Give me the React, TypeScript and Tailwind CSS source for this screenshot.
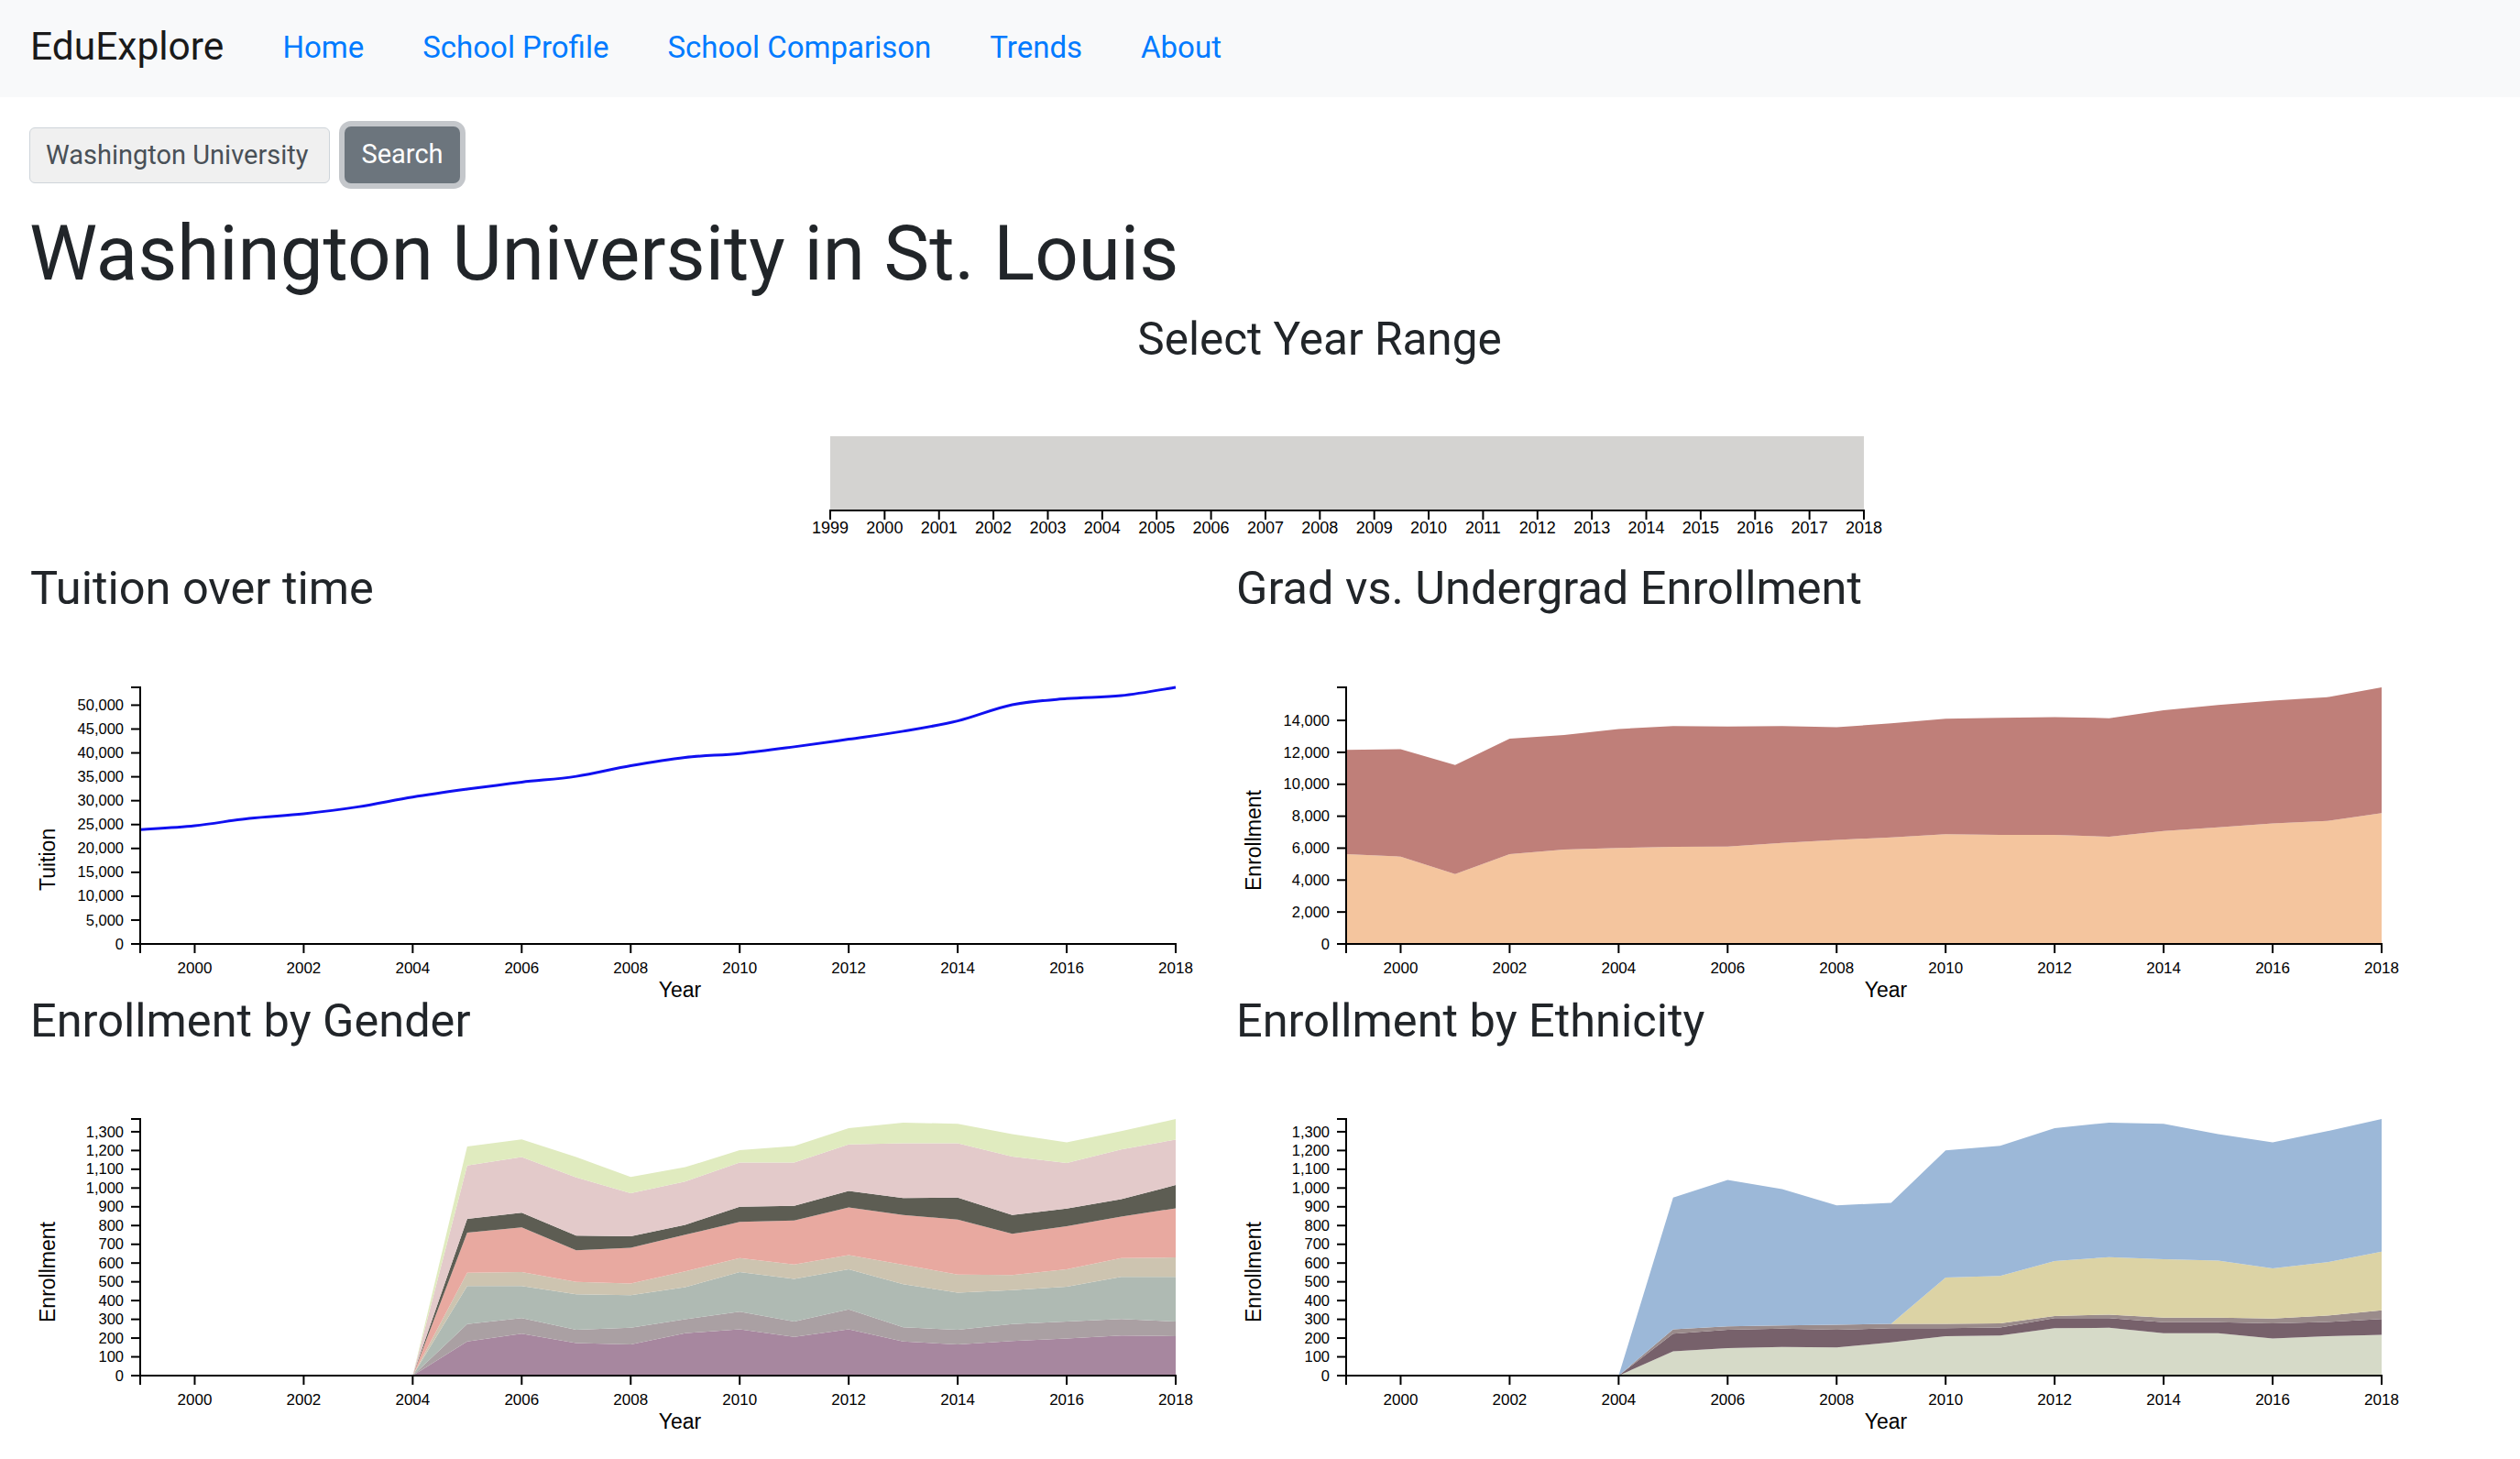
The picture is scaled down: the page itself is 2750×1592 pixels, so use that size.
import React from "react";

const YEARS = Array.from({ length: 20 }, (_, i) => 1999 + i);
const X0 = 120;
const X1 = 1250;
const YT = 82;
const YB = 362;
const AX = "Liberation Sans, Arial, sans-serif";

const xs = (i: number) => X0 + (i * (X1 - X0)) / 19;
const fmt = (n: number) => n.toLocaleString("en-US");

const Z6 = [0, 0, 0, 0, 0, 0];

const TUITION = [
  23930, 24760, 26290, 27250, 28710, 30750, 32410, 33880, 35090, 37330, 39050,
  39880, 41280, 42880, 44540, 46710, 50090, 51370, 52000, 53730,
];

const UNDER = [
  5620, 5470, 4380, 5620, 5910, 6010, 6080, 6100, 6330, 6520, 6670, 6870, 6830,
  6830, 6710, 7080, 7310, 7550, 7700, 8200,
];
const TOTAL = [
  12160, 12200, 11200, 12850, 13080, 13460, 13650, 13610, 13650, 13570, 13820,
  14100, 14160, 14210, 14140, 14630, 14960, 15240, 15450, 16070,
];

const GENDER: { c: string; v: number[] }[] = [
  { c: "#a7879f", v: [...Z6, 182, 223, 174, 166, 226, 247, 206, 247, 182, 166, 185, 198, 214, 210] },
  { c: "#aaa0a3", v: [...Z6, 275, 307, 244, 255, 300, 341, 288, 353, 258, 244, 275, 288, 302, 288] },
  { c: "#afbab3", v: [...Z6, 478, 478, 434, 429, 471, 552, 515, 567, 487, 442, 455, 474, 526, 526] },
  { c: "#cdc4b0", v: [...Z6, 548, 552, 499, 491, 556, 627, 593, 643, 591, 539, 536, 567, 627, 630] },
  { c: "#e8a9a0", v: [...Z6, 762, 790, 668, 681, 751, 819, 827, 897, 856, 832, 756, 796, 848, 892] },
  { c: "#5d5d53", v: [...Z6, 835, 869, 746, 743, 804, 900, 905, 985, 946, 949, 856, 890, 941, 1016] },
  { c: "#e3caca", v: [...Z6, 1120, 1165, 1056, 972, 1035, 1136, 1136, 1233, 1238, 1238, 1168, 1133, 1206, 1258] },
  { c: "#e0ebbf", v: [...Z6, 1222, 1259, 1165, 1059, 1111, 1202, 1224, 1319, 1349, 1342, 1287, 1243, 1303, 1368] },
];

const ETHNIC: { c: string; v: number[] }[] = [
  { c: "#d6dac8", v: [...Z6, 130, 146, 153, 150, 177, 210, 214, 253, 255, 226, 226, 198, 210, 218] },
  { c: "#77616b", v: [...Z6, 223, 244, 250, 244, 253, 253, 257, 307, 307, 284, 284, 279, 286, 302] },
  { c: "#9a8b8b", v: [...Z6, 247, 262, 268, 271, 276, 276, 279, 318, 325, 309, 309, 304, 320, 348] },
  { c: "#dcd3a5", v: [...Z6, 247, 262, 268, 271, 276, 523, 531, 611, 632, 621, 613, 572, 604, 661] },
  { c: "#9cb8d8", v: [...Z6, 949, 1043, 994, 908, 921, 1201, 1225, 1319, 1349, 1342, 1287, 1243, 1303, 1368] },
];

function yScale(max: number) {
  return (v: number) => YB - (v / max) * (YB - YT);
}

function smoothPath(pts: [number, number][]) {
  let d = `M${pts[0][0]},${pts[0][1]}`;
  for (let i = 0; i < pts.length - 1; i++) {
    const p0 = pts[i - 1] || pts[i];
    const p1 = pts[i];
    const p2 = pts[i + 1];
    const p3 = pts[i + 2] || p2;
    const c1x = p1[0] + (p2[0] - p0[0]) / 6;
    const c1y = p1[1] + (p2[1] - p0[1]) / 6;
    const c2x = p2[0] - (p3[0] - p1[0]) / 6;
    const c2y = p2[1] - (p3[1] - p1[1]) / 6;
    d += ` C${c1x},${c1y} ${c2x},${c2y} ${p2[0]},${p2[1]}`;
  }
  return d;
}

function Stack({ layers, max }: { layers: { c: string; v: number[] }[]; max: number }) {
  const y = yScale(max);
  return (
    <g>
      {layers.map((layer, li) => {
        const prev = li === 0 ? YEARS.map(() => 0) : layers[li - 1].v;
        const top = layer.v.map((v, i) => `${xs(i)},${y(v)}`).join(" L");
        const bottom = prev
          .map((v, i) => [xs(i), y(v)] as [number, number])
          .reverse()
          .map((p) => `${p[0]},${p[1]}`)
          .join(" L");
        return <path key={li} d={`M${top} L${bottom} Z`} fill={layer.c} />;
      })}
    </g>
  );
}

function Axes({ max, ticks, label }: { max: number; ticks: number[]; label: string }) {
  const y = yScale(max);
  const xt = [2000, 2002, 2004, 2006, 2008, 2010, 2012, 2014, 2016, 2018];
  return (
    <g fontFamily={AX} fill="#000">
      <path d={`M${X0 - 10},${YT}H${X0}V${YB}H${X0 - 10}`} fill="none" stroke="#000" strokeWidth={2} />
      {ticks.map((t) => (
        <g key={t}>
          <line x1={X0 - 10} x2={X0} y1={y(t)} y2={y(t)} stroke="#000" strokeWidth={2} />
          <text x={X0 - 18} y={y(t)} dy="0.34em" textAnchor="end" fontSize={16.5}>
            {fmt(t)}
          </text>
        </g>
      ))}
      <path d={`M${X0},${YB + 10}V${YB}H${X1}V${YB + 10}`} fill="none" stroke="#000" strokeWidth={2} />
      {xt.map((yr) => {
        const x = xs(yr - 1999);
        return (
          <g key={yr}>
            <line x1={x} x2={x} y1={YB} y2={YB + 10} stroke="#000" strokeWidth={2} />
            <text x={x} y={YB + 32} textAnchor="middle" fontSize={17}>
              {yr}
            </text>
          </g>
        );
      })}
      <text x={(X0 + X1) / 2 + 24} y={YB + 58} textAnchor="middle" fontSize={23}>
        Year
      </text>
      <text transform={`translate(27,${YB - 58}) rotate(-90)`} fontSize={23}>
        {label}
      </text>
    </g>
  );
}

function ChartCard({ title, children }: { title: string; children: React.ReactNode }) {
  return (
    <div className="flex flex-col">
      <h3 className="text-[50.5px] leading-none text-[#212529] m-0 font-normal">{title}</h3>
      <svg width={1316} height={421} className="block overflow-visible">
        {children}
      </svg>
    </div>
  );
}

function range(a: number, b: number, s: number) {
  const r: number[] = [];
  for (let v = a; v <= b; v += s) r.push(v);
  return r;
}

export default function App() {
  const ty = yScale(53730);
  const tuitionPts = TUITION.map((v, i) => [xs(i), ty(v)] as [number, number]);
  const gy = yScale(16070);
  const underPath =
    `M${UNDER.map((v, i) => `${xs(i)},${gy(v)}`).join(" L")} L${xs(19)},${YB} L${xs(0)},${YB} Z`;
  const gradPath =
    `M${TOTAL.map((v, i) => `${xs(i)},${gy(v)}`).join(" L")} L` +
    UNDER.map((v, i) => [xs(i), gy(v)])
      .reverse()
      .map((p) => `${p[0]},${p[1]}`)
      .join(" L") +
    " Z";

  return (
    <div className="w-[2750px] min-h-[1592px] bg-white font-['Roboto',sans-serif] text-[#212529]">
      <nav className="h-[106px] bg-[#f8f9fa] flex items-center pl-[33px] pb-[4px]">
        <span className="text-[42.5px] leading-none text-[#1a1a1a] mr-[64px]">EduExplore</span>
        <div className="flex gap-[64px] text-[33px] leading-none text-[#007bff]">
          <a>Home</a>
          <a>School Profile</a>
          <a>School Comparison</a>
          <a>Trends</a>
          <a>About</a>
        </div>
      </nav>

      <div className="pl-[32px] pt-[32px] flex gap-[16px] items-center">
        <input
          readOnly
          value="Washington University"
          className="w-[328px] h-[61px] border border-[#ced4da] bg-[#f0f0f0] rounded-[6px] pl-[17px] text-[29px] text-[#495057] outline-none font-['Roboto',sans-serif]"
        />
        <button className="w-[126px] h-[62px] rounded-[7px] bg-[#6c757d] text-white text-[29px] shadow-[0_0_0_6px_#c4c7cb] font-['Roboto',sans-serif]">
          Search
        </button>
      </div>

      <h1 className="ml-[32px] mt-[35px] text-[83.5px] leading-none font-normal">
        Washington University in St. Louis
      </h1>

      <h2 className="w-full pl-[130px] mt-[27px] text-center text-[49.5px] leading-none font-normal">
        Select Year Range
      </h2>

      <div className="pl-[866px] mt-[75px]">
        <svg width={1250} height={120} className="block">
          <rect x={40} y={6} width={1128} height={80} fill="#d4d3d1" />
          <path d={`M40,97V87H1168V97`} fill="none" stroke="#000" strokeWidth={2} />
          {YEARS.map((yr, i) => {
            const x = 40 + (i * 1128) / 19;
            return (
              <g key={yr}>
                <line x1={x} x2={x} y1={87} y2={97} stroke="#000" strokeWidth={2} />
                <text x={x} y={112} textAnchor="middle" fontSize={18} fontFamily={AX}>
                  {yr}
                </text>
              </g>
            );
          })}
        </svg>
      </div>

      <div className="grid grid-cols-[1316px_1316px] pl-[33px] mt-[27px]">
        <ChartCard title="Tuition over time">
          <path d={smoothPath(tuitionPts)} fill="none" stroke="#1010f0" strokeWidth={3} />
          <Axes max={53730} ticks={range(0, 50000, 5000)} label="Tuition" />
        </ChartCard>
        <ChartCard title="Grad vs. Undergrad Enrollment">
          <path d={underPath} fill="#f4c59e" />
          <path d={gradPath} fill="#bf7f79" />
          <Axes max={16070} ticks={range(0, 14000, 2000)} label="Enrollment" />
        </ChartCard>
        <ChartCard title="Enrollment by Gender">
          <Stack layers={GENDER} max={1368} />
          <Axes max={1368} ticks={range(0, 1300, 100)} label="Enrollment" />
        </ChartCard>
        <ChartCard title="Enrollment by Ethnicity">
          <Stack layers={ETHNIC} max={1368} />
          <Axes max={1368} ticks={range(0, 1300, 100)} label="Enrollment" />
        </ChartCard>
      </div>
    </div>
  );
}
